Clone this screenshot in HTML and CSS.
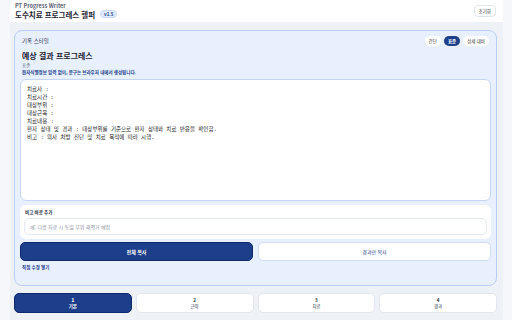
FILE: index.html
```html
<!DOCTYPE html>
<html lang="ko">
<head>
    <meta charset="UTF-8">
    <meta name="viewport" content="width=device-width, initial-scale=1.0">
    <title>PT Progress Writer</title>
    <link rel="stylesheet" href="styles.css">
</head>
<body>
    <div class="app">

        <!-- Header -->
        <header class="header">
            <div class="brand">
                <p class="brand-sub">PT Progress Writer</p>
                <h1 class="brand-title">도수치료 프로그레스 헬퍼 <span class="badge">v1.5</span></h1>
            </div>
            <button class="reset-btn">초기화</button>
        </header>

        <main class="main">
            <section class="card">
                <div class="style-row">
                    <span class="style-label">기록 스타일</span>
                    <div class="pills">
                        <button class="pill">간단</button>
                        <button class="pill active">표준</button>
                        <button class="pill">상세 대비</button>
                    </div>
                </div>

                <h2 class="result-title">예상 결과 프로그레스</h2>
                <p class="result-mode">표준</p>
                <p class="notice">환자식별정보 입력 없이, 문구는 브라우저 내에서 생성됩니다.</p>

                <!-- Output preview -->
                <div class="output">치료사 :
치료시간 :
대상부위 :
대상근육 :
치료내용 :
환자 상태 및 경과 : 대상부위를 기준으로 환자 상태와 치료 반응을 확인함.
비고 : 의사 처방 진단 및 치료 목적에 따라 시행.</div>

                <div class="note-box">
                    <label class="note-label" for="noteInput">비고 바로 추가</label>
                    <input type="text" id="noteInput" class="note-input" placeholder="예: 다음 치료 시 동일 부위 재평가 예정">
                </div>

                <div class="copy-row">
                    <button class="copy-btn primary">전체 복사</button>
                    <button class="copy-btn">경과만 복사</button>
                </div>

                <a class="edit-link" href="#">직접 수정 열기</a>
            </section>

            <!-- Step tabs -->
            <nav class="tabs">
                <button class="tab active"><b>1</b>기본</button>
                <button class="tab"><b>2</b>근육</button>
                <button class="tab"><b>3</b>치료</button>
                <button class="tab"><b>4</b>경과</button>
            </nav>
        </main>
    </div>
</body>
</html>
```

FILE: styles.css
```css
body {
    margin: 0;
    background: #f6f7fb;
    font-family: "Noto Sans CJK KR", "Noto Sans", sans-serif;
    color: #1f2433;
}

button {
    font-family: inherit;
    cursor: pointer;
}

.app {
    width: 493px;
    min-height: 320px;
    margin-left: 10px;
    background: #eef1f6;
}

/* Header */
.header {
    height: 22px;
    background: #fff;
    display: flex;
    align-items: center;
    justify-content: space-between;
    padding: 0 7px 0 5px;
}

.brand-sub {
    margin: 0;
    font-size: 5.5px;
    font-weight: 700;
    color: #5b6275;
    line-height: 6px;
}

.brand-title {
    margin: 0;
    font-size: 7.5px;
    font-weight: 700;
    line-height: 11px;
    display: flex;
    align-items: center;
    gap: 5px;
}

.badge {
    font-size: 4.5px;
    color: #1d3e8a;
    background: #e2ebfb;
    border: 1px solid #c9d8f3;
    border-radius: 6px;
    padding: 0 3px;
    line-height: 6px;
}

.reset-btn {
    font-size: 4.5px;
    background: #fff;
    border: 1px solid #e1e5ee;
    border-radius: 4px;
    height: 12px;
    padding: 0 4px;
    color: #333;
}

/* Main */
.main {
    padding: 8px 6px 0 4px;
}

.card {
    background: #e8f0fe;
    border: 1.5px solid #b8cff5;
    border-radius: 8px;
    padding: 5px 5px 15px 5px;
    margin-bottom: 7px;
}

.style-row {
    display: flex;
    align-items: center;
    justify-content: space-between;
    padding: 0 2px;
}

.style-label {
    font-size: 5.5px;
    color: #333a4d;
}

.pills {
    display: flex;
    gap: 3px;
}

.pill {
    font-size: 4.5px;
    height: 10px;
    padding: 0 4px;
    border: none;
    border-radius: 6px;
    background: #fff;
    color: #333;
}

.pill.active {
    background: #1d3e8a;
    color: #fff;
    font-weight: 700;
}

.result-title {
    margin: 4px 2px 0;
    font-size: 8px;
    font-weight: 700;
    line-height: 11px;
}

.result-mode {
    margin: 1px 2px 0;
    font-size: 4.5px;
    color: #6b7286;
    line-height: 7px;
}

.notice {
    margin: 0 2px 3px;
    font-size: 4.5px;
    font-weight: 700;
    color: #1d3e8a;
    line-height: 7px;
}

.output {
    background: #fff;
    border: 1px solid #c5d6f5;
    border-radius: 6px;
    height: 110px;
    padding: 5px 6px;
    white-space: pre-line;
    font-family: "DejaVu Sans Mono", "Noto Sans CJK KR", monospace;
    font-size: 5.5px;
    line-height: 8px;
    color: #222;
}

.note-box {
    background: #fff;
    border-radius: 6px;
    margin-top: 4px;
    padding: 4px 4px 4px;
    display: flex;
    flex-direction: column;
    gap: 3px;
}

.note-label {
    font-size: 4.5px;
    font-weight: 700;
    color: #2a3042;
    padding-left: 1px;
}

.note-input {
    height: 17px;
    box-sizing: border-box;
    border: 1px solid #e3e7f0;
    border-radius: 5px;
    padding: 0 5px;
    font-family: inherit;
    font-size: 5px;
}

.note-input::placeholder {
    color: #8a90a0;
}

.copy-row {
    display: grid;
    grid-template-columns: 1fr 1fr;
    gap: 5px;
    margin-top: 3px;
}

.copy-btn {
    height: 19px;
    font-size: 5px;
    border: 1px solid #cfdcf4;
    border-radius: 5px;
    background: #fff;
    color: #1d3e8a;
}

.copy-btn.primary {
    background: #1d3e8a;
    border-color: #0f2a6a;
    color: #fff;
    font-weight: 700;
}

.edit-link {
    display: block;
    margin: 3px 2px 0;
    font-size: 4.5px;
    font-weight: 700;
    color: #1d3e8a;
    text-decoration: none;
}

/* Tabs */
.tabs {
    display: grid;
    grid-template-columns: repeat(4, 1fr);
    gap: 4px;
}

.tab {
    height: 20px;
    border: 1px solid #e3e7ef;
    border-radius: 5px;
    background: #fff;
    display: flex;
    flex-direction: column;
    align-items: center;
    justify-content: center;
    font-size: 4.5px;
    line-height: 6px;
    color: #2a3042;
    padding: 0;
}

.tab.active {
    background: #1d3e8a;
    border-color: #0f2a6a;
    color: #fff;
    font-weight: 700;
}
```
